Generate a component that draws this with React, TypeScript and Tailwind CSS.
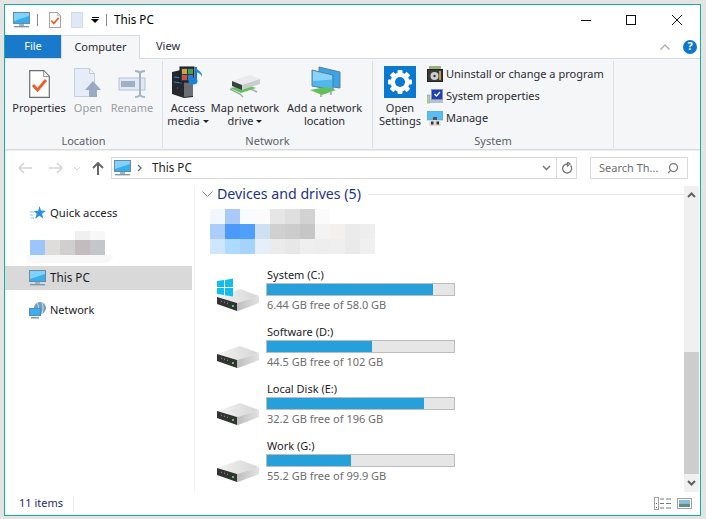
import React from "react";
import { Search } from "lucide-react";

const PcIcon = ({ size = 17 }: { size?: number }) => (
  <svg width={size} height={size} viewBox="0 0 17 17">
    <rect x="0.5" y="0.5" width="16" height="11" fill="#37aef2" stroke="#6f8a9c" />
    <path d="M1 1h15v3L1 9z" fill="#7fd2fb" />
    <rect x="6" y="12" width="5" height="2" fill="#9fb4c2" />
    <rect x="1" y="14" width="15" height="1.4" fill="#7d98ab" />
  </svg>
);

const DocCheckIcon = ({ w = 12, h = 16 }: { w?: number; h?: number }) => (
  <svg width={w} height={h} viewBox="0 0 21 28">
    <path d="M.7.7h14l5.6 5.6v21H.7z" fill="#fff" stroke="#6e6e6e" strokeWidth="1.2" />
    <path d="M14.5 1v5.5h5.5" fill="#eee" stroke="#9a9a9a" />
    <path d="M4 15l4.5 5L17 10" fill="none" stroke="#e8612c" strokeWidth="3" />
  </svg>
);

const OpenIcon = () => (
  <svg width="28" height="30" viewBox="0 0 28 30">
    <path d="M.5.5h15l5 5v23H.5z" fill="#e6edf8" stroke="#c3d0e2" />
    <path d="M15.5 1v4.5H20" fill="#f4f4f4" stroke="#c8c8c8" />
    <path d="M19 13l8 9h-4v7h-8v-7h-4z" fill="#9aa9c2" />
  </svg>
);

const RenameIcon = () => (
  <svg width="29" height="28" viewBox="0 0 29 28">
    <rect x="1" y="8" width="26" height="12" fill="#e2e9f4" stroke="#b4c3d6" />
    <rect x="3" y="11" width="14" height="6" fill="#9eb0c8" />
    <path d="M17 1c3 0 4 .5 5 2 1-1.500 2-2 5-2M22 3v22M17 27c3 0 4-.5 5-2 1 1.500 2 2 5 2" fill="none" stroke="#a5b3c6" strokeWidth="2" />
  </svg>
);

const MediaIcon = () => (
  <svg width="32" height="32" viewBox="0 0 32 32">
    <path d="M0 6l9-2 12 3v24l-9 1-12-4z" fill="#26282c" />
    <path d="M12 10v21l9-1V8z" fill="#6b6f75" />
    <path d="M2 11l8 1M2 16l8 1M5 22l1 0" stroke="#2c8ad6" strokeWidth="1" />
    <rect x="8" y="1" width="14" height="15" fill="#2a3a4a" stroke="#111" />
    <rect x="10" y="3" width="5" height="5" fill="#d8a23a" />
    <rect x="16" y="3" width="5" height="5" fill="#4a9c4f" />
    <rect x="10" y="9" width="5" height="5" fill="#c9533c" />
    <rect x="16" y="9" width="5" height="5" fill="#3f78c4" />
    <path d="M24 1v13" stroke="#1178d4" strokeWidth="2" />
    <path d="M24 1c1 4 7 4 6 10-1-3-3-4-6-5z" fill="#1b8fe6" />
    <ellipse cx="21" cy="15" rx="4.500" ry="3.500" fill="#1784dc" />
  </svg>
);

const MapDriveIcon = () => (
  <svg width="32" height="24" viewBox="0 0 32 24">
    <path d="M1 14l11 5 15-5-8-3z" fill="#62c05a" />
    <path d="M1 15l10 5 3 3M22 15l6 3" stroke="#a0aaa0" strokeWidth="1.500" fill="none" />
    <path d="M3 7l18-6 10 4-18 6z" fill="#e9eaea" />
    <path d="M3 7l10 4v5L3 12z" fill="#3c3f42" />
    <path d="M13 11l18-6v5l-18 6z" fill="#c9cbcc" />
  </svg>
);

const NetLocationIcon = () => (
  <svg width="32" height="32" viewBox="0 0 32 32">
    <path d="M10 1l21 5v16l-21-3z" fill="#3aa5e6" stroke="#5b7f96" />
    <path d="M3 4l21 5v15L3 20z" fill="#4fb8ee" stroke="#5b7f96" />
    <path d="M4 5l19 4.500v4L4 15z" fill="#8ad5f7" />
    <path d="M1 24l12 5 14-5-10-3z" fill="#62c05a" />
    <path d="M12 28v3M22 26v3" stroke="#9aa89a" strokeWidth="1.500" />
  </svg>
);

const SettingsIcon = () => (
  <svg width="32" height="32" viewBox="0 0 32 32">
    <rect width="32" height="32" fill="#0b78d0" />
    <g fill="#fff">
      <circle cx="16" cy="16" r="9.500" />
      <rect x="13.500" y="4" width="5" height="24" rx="1" />
      <rect x="13.500" y="4" width="5" height="24" rx="1" transform="rotate(45 16 16)" />
      <rect x="13.500" y="4" width="5" height="24" rx="1" transform="rotate(90 16 16)" />
      <rect x="13.500" y="4" width="5" height="24" rx="1" transform="rotate(135 16 16)" />
    </g>
    <circle cx="16" cy="16" r="5" fill="#0b78d0" />
  </svg>
);

const UninstallIcon = () => (
  <svg width="16" height="16" viewBox="0 0 16 16">
    <rect x="2" y="0" width="12" height="4" fill="#9ab07a" />
    <rect x="0.500" y="3.500" width="15" height="12" fill="#3a3a3a" stroke="#222" />
    <circle cx="7.500" cy="10" r="4" fill="#cfcfcf" />
    <circle cx="7.500" cy="10" r="1.200" fill="#333" />
    <rect x="12" y="5" width="2" height="9" fill="#b59b5a" />
  </svg>
);

const SysPropsIcon = () => (
  <svg width="16" height="15" viewBox="0 0 16 15">
    <rect x="0" y="6" width="3" height="8" fill="#a6d9a0" stroke="#889" strokeWidth=".5" />
    <rect x="4.500" y="0.500" width="11" height="10" fill="#1f3fc0" stroke="#8894a8" />
    <path d="M7.500 5l2 2 3.500-4" fill="none" stroke="#fff" strokeWidth="1.300" />
    <rect x="3" y="11" width="13" height="3" fill="#b8c0cc" />
  </svg>
);

const ManageIcon = () => (
  <svg width="16" height="15" viewBox="0 0 16 15">
    <rect x="0" y="0" width="16" height="9" fill="#58bdf5" stroke="#6f9ab5" strokeWidth=".6" />
    <path d="M3 9h10l1 6H2z" fill="#dcdcdc" />
    <rect x="4" y="10.500" width="2.500" height="3" fill="#333" />
    <rect x="9.500" y="10.500" width="2.500" height="3" fill="#333" />
    <rect x="6" y="6" width="4" height="3" fill="#555" />
  </svg>
);

const StarIcon = () => (
  <svg width="16" height="15" viewBox="0 0 16 15">
    <path d="M9.500 0l1.500 4.500 5 .2-4 3 1.400 5-4-2.900-4.200 2.900 1.500-5-3-2.800 4.500-.2z" fill="#2b8fdb" />
    <path d="M0 6h4M0 9h3M1 12h3" stroke="#8cc4ec" strokeWidth="1" />
  </svg>
);

const NetworkIcon = () => (
  <svg width="18" height="17" viewBox="0 0 18 17">
    <circle cx="11" cy="6" r="6" fill="#6f9cc4" />
    <path d="M8 1c2 2 2 8 0 10M13 1c1.500 3 1.500 7 0 10" stroke="#d4e4f0" fill="none" />
    <rect x="0.500" y="6.500" width="11" height="7" fill="#39aef2" stroke="#5d8aa6" />
    <rect x="2" y="15" width="8" height="1.500" fill="#7d98ab" />
  </svg>
);

const DriveIcon = ({ windows = false }: { windows?: boolean }) => (
  <svg width="44" height="33" viewBox="0 0 44 33" className="shrink-0">
    <defs>
      <linearGradient id="driveTop" x1="0" x2="1" y1="0" y2="0">
        <stop offset="0" stopColor="#f4f4f4" />
        <stop offset="1" stopColor="#d4d4d4" />
      </linearGradient>
      <linearGradient id="driveSide" x1="0" x2="1" y1="0" y2="0">
        <stop offset="0" stopColor="#bdbdbd" />
        <stop offset="1" stopColor="#e2e2e2" />
      </linearGradient>
    </defs>
    <path d="M1 19l23-8 19 7-22 7z" fill="url(#driveTop)" />
    <path d="M1 19l20 6v8L1 26z" fill="#333" />
    <path d="M21 25l22-7v7l-21 8h-1z" fill="url(#driveSide)" />
    <rect x="16" y="27" width="2" height="2" fill="#3fd45a" />
    <path d="M5 23l1 .5M8 24l1 .5M11 25l1 .5" stroke="#999" />
    {windows && (
      <g fill="#12bdee">
        <path d="M1 3l7-1v7H1z" />
        <path d="M9 2l8-1.500V9H9z" />
        <path d="M1 10h7v7l-7-1z" />
        <path d="M9 10h8v8.500l-8-1.200z" />
      </g>
    )}
  </svg>
);

const NavChevron = ({ dir }: { dir: "left" | "right" }) => (
  <svg width="14" height="12" viewBox="0 0 14 12">
    <path d={dir === "left" ? "M6 1L1 6l5 5M1 6h13" : "M8 1l5 5-5 5M13 6H0"} fill="none" stroke="#d4d4d4" strokeWidth="1.500" />
  </svg>
);

const RibbonButton = ({ w, icon, lines, disabled, caret }: { w: string; icon: React.ReactNode; lines: string[]; disabled?: boolean; caret?: boolean }) => (
  <div className={`${w} flex flex-col items-center`}>
    <div className="h-[32px] flex items-end justify-center">{icon}</div>
    <div className={`mt-[3px] text-center leading-[13px] whitespace-nowrap ${disabled ? "text-[#9a9da3]" : "text-[#2b2b33]"}`}>
      {lines.map((line, i) => (
        <div key={line}>
          {line}
          {caret && i === lines.length - 1 && <span className="inline-block ml-[3px] mb-[2px] border-x-[3px] border-t-[3px] border-x-transparent border-t-[#222]" />}
        </div>
      ))}
    </div>
  </div>
);

const RibbonGroup = ({ w, label, children, last }: { w: string; label: string; children: React.ReactNode; last?: boolean }) => (
  <div className={`${w} h-[87px] mt-[2px] flex flex-col ${last ? "" : "border-r"} border-[#dcdfe3]`}>
    <div className="flex-1 flex pt-[5px]">{children}</div>
    <div className="h-[15px] text-center text-[#5c6068] leading-[15px]">{label}</div>
  </div>
);

const SmallAction = ({ icon, label }: { icon: React.ReactNode; label: string }) => (
  <div className="h-[22px] flex items-center gap-[3px]">
    <span className="w-[16px] flex justify-center">{icon}</span>
    <span className="text-[#2b2b33] whitespace-nowrap">{label}</span>
  </div>
);

const drives = [
  { name: "System (C:)", free: "6.44 GB free of 58.0 GB", pct: 89, windows: true },
  { name: "Software (D:)", free: "44.5 GB free of 102 GB", pct: 56 },
  { name: "Local Disk (E:)", free: "32.2 GB free of 196 GB", pct: 84 },
  { name: "Work (G:)", free: "55.2 GB free of 99.9 GB", pct: 45 },
];

const mosaic = [
  ["bg-[#f2f6fd]", "bg-[#a9c9fb]", "bg-[#f8fbff]", "bg-[#fafbfa]", "bg-[#e6e6e6]", "bg-[#dfdfdf]", "bg-[#d2d2d2]", "bg-[#fbfbfb]", "bg-white", "bg-white", "bg-white"],
  ["bg-[#abcdfb]", "bg-[#4a99fb]", "bg-[#4f9ffb]", "bg-[#cfe0f3]", "bg-[#d0d0d0]", "bg-[#cccccc]", "bg-[#c6c6c6]", "bg-[#f3f3f3]", "bg-[#f2f1f0]", "bg-[#eaebea]", "bg-[#eeeeee]"],
  ["bg-[#cfe7fe]", "bg-[#addafe]", "bg-[#a4d3fc]", "bg-[#e6eefa]", "bg-[#ebebeb]", "bg-[#e7e7e7]", "bg-[#efefef]", "bg-[#eeeeee]", "bg-[#efefef]", "bg-[#eaeaea]", "bg-[#f0f0f0]"],
];

export default function App() {
  return (
    <div className="w-[706px] h-[519px] bg-[#e4e4e4] pt-[4px] pl-[4px] pr-[5px] pb-[3px] text-[11px] overflow-hidden font-['Noto_Sans',sans-serif]">
      <div className="h-full bg-white border border-[#14b09a] flex flex-col">
        {/* Title bar */}
        <div className="h-[30px] flex items-center shrink-0 pl-[8px]">
          <PcIcon />
          <span className="ml-[7px] w-px h-[12px] bg-[#8a8a8a]" />
          <span className="ml-[11px] flex"><DocCheckIcon /></span>
          <span className="ml-[10px] w-[12px] h-[16px] bg-[#dfe8f6] border border-[#d0dcec]" />
          <span className="ml-[8px] flex flex-col items-center gap-[1px]">
            <span className="w-[7px] h-px bg-black" />
            <span className="border-x-[4px] border-t-[4px] border-x-transparent border-t-black" />
          </span>
          <span className="ml-[7px] w-px h-[12px] bg-[#8a8a8a]" />
          <span className="ml-[7px] text-[11.7px] text-black">This PC</span>
          <div className="ml-auto flex items-center pr-[18px]">
            <svg width="10" height="10" viewBox="0 0 10 10"><path d="M0 5.500h10" stroke="#111" /></svg>
            <svg className="ml-[35px]" width="10" height="10" viewBox="0 0 10 10"><rect x=".5" y=".5" width="9" height="9" fill="none" stroke="#111" /></svg>
            <svg className="ml-[36px]" width="10" height="10" viewBox="0 0 10 10"><path d="M0 0l10 10M10 0L0 10" stroke="#111" /></svg>
          </div>
        </div>

        {/* Tabs */}
        <div className="h-[24px] flex items-stretch shrink-0 border-b border-[#dadbdc] relative">
          <div className="w-[56px] h-[23px] bg-[#1979ca] text-white flex items-center justify-center">File</div>
          <div className="w-[79px] h-[24px] bg-[#f5f6f7] border-x border-t border-[#dadbdc] flex items-center justify-center text-[#2b2b33]">Computer</div>
          <div className="w-[56px] flex items-center justify-center text-[#2b2b33]">View</div>
          <div className="ml-auto flex items-center pr-[3px] gap-[13px]">
            <svg width="10" height="6" viewBox="0 0 10 6"><path d="M.5 5.500L5 1l4.500 4.500" fill="none" stroke="#a8a8a8" strokeWidth="1.200" /></svg>
            <span className="w-[14px] h-[14px] rounded-full bg-[#0f76d0] text-white text-[11px] font-bold flex items-center justify-center">?</span>
          </div>
        </div>

        {/* Ribbon */}
        <div className="h-[91px] bg-[#f5f6f7] border-b border-[#dadbdc] flex shrink-0">
          <RibbonGroup w="w-[158px]" label="Location">
            <div className="w-[8px]" />
            <RibbonButton w="w-[52px]" icon={<DocCheckIcon w={21} h={28} />} lines={["Properties"]} />
            <RibbonButton w="w-[46px]" icon={<OpenIcon />} lines={["Open"]} disabled />
            <RibbonButton w="w-[42px]" icon={<RenameIcon />} lines={["Rename"]} disabled />
          </RibbonGroup>
          <RibbonGroup w="w-[210px]" label="Network">
            <RibbonButton w="w-[50px]" icon={<MediaIcon />} lines={["Access", "media"]} caret />
            <RibbonButton w="w-[64px]" icon={<MapDriveIcon />} lines={["Map network", "drive"]} caret />
            <RibbonButton w="w-[95px]" icon={<NetLocationIcon />} lines={["Add a network", "location"]} />
          </RibbonGroup>
          <RibbonGroup w="w-[241px]" label="System">
            <RibbonButton w="w-[54px]" icon={<SettingsIcon />} lines={["Open", "Settings"]} />
            <div className="flex flex-col -mt-[3px]">
              <SmallAction icon={<UninstallIcon />} label="Uninstall or change a program" />
              <SmallAction icon={<SysPropsIcon />} label="System properties" />
              <SmallAction icon={<ManageIcon />} label="Manage" />
            </div>
          </RibbonGroup>
        </div>

        {/* Address bar */}
        <div className="h-[36px] flex items-center shrink-0 pl-[13px] pt-[1px] border-t border-[#eeeeee] pb-[2px]">
          <NavChevron dir="left" />
          <span className="ml-[17px]"><NavChevron dir="right" /></span>
          <svg className="ml-[10px]" width="8" height="5" viewBox="0 0 8 5"><path d="M1 1l3 3 3-3" fill="none" stroke="#d4d4d4" /></svg>
          <svg className="ml-[11px]" width="12" height="13" viewBox="0 0 12 13"><path d="M6 1v12M1 6l5-5 5 5" fill="none" stroke="#666" strokeWidth="2" /></svg>
          <div className="ml-[7px] w-[466px] h-[22px] border border-[#d9d9d9] flex items-center">
            <span className="ml-[2px] flex"><PcIcon /></span>
            <svg className="ml-[6px]" width="5" height="8" viewBox="0 0 5 8"><path d="M1 1l3 3-3 3" fill="none" stroke="#666" strokeWidth="1.300" /></svg>
            <span className="ml-[10px] text-[11.7px] text-[#222]">This PC</span>
            <svg className="ml-auto mr-[5px]" width="9" height="6" viewBox="0 0 9 6"><path d="M1 1l3.500 3.500L8 1" fill="none" stroke="#777" strokeWidth="1.500" /></svg>
            <div className="w-[20px] h-full border-l border-[#d9d9d9] flex items-center justify-center">
              <svg width="12" height="12" viewBox="0 0 12 12"><path d="M9.500 3.500a4.500 4.500 0 1 1-3-1.500M6.500 0v4l2.500-2z" fill="none" stroke="#777" strokeWidth="1.300" /></svg>
            </div>
          </div>
          <div className="ml-[13px] w-[98px] h-[22px] border border-[#d9d9d9] flex items-center pl-[8px] text-[#6d6d6d]">
            <span>Search Th...</span>
            <Search size={12} strokeWidth={2.500} className="ml-auto mr-[8px] -scale-x-100 text-[#777]" />
          </div>
        </div>

        {/* Main */}
        <div className="flex-1 flex min-h-0">
          <div className="w-[190px] border-r border-[#f0f0f0] shrink-0 pt-[15px]">
            <div className="h-[24px] flex items-center pl-[25px] gap-[3px] text-[#1c1c28] text-[11.3px]">
              <span className="w-[17px] flex"><StarIcon /></span>Quick access
            </div>
            <div className="mt-[6px] h-[35px]">
              <div className="h-[9px] flex pl-[70px]">
                <span className="w-[15px] bg-[#f0f0f0]" />
                <span className="w-[15px] bg-[#f7f7f7]" />
              </div>
              <div className="h-[15px] flex pl-[25px]">
                <span className="w-[15px] bg-[#9cc5fb]" />
                <span className="w-[15px] bg-[#dedddc]" />
                <span className="w-[15px] bg-[#cfcfcf]" />
                <span className="w-[15px] bg-[#c2bcbf]" />
                <span className="w-[15px] bg-[#c4c7ca]" />
              </div>
              <div className="h-[8px] w-[87px] ml-[21px] bg-[#f8f8f8] rounded-b-full" />
            </div>
            <div className="w-[187px] h-[24px] bg-[#d9d9d9] flex items-center pl-[24px] gap-[4px] text-[#1c1c28] text-[11.7px]">
              <PcIcon />This PC
            </div>
            <div className="mt-[8px] h-[24px] flex items-center pl-[24px] gap-[3px] text-[#1c1c28] text-[11px]">
              <NetworkIcon />Network
            </div>
          </div>

          <div className="flex-1 min-w-0 pl-[7px] pt-[1px]">
            <div className="h-[14px] flex items-center">
              <svg width="11" height="6" viewBox="0 0 11 6"><path d="M.5.500l5 5 5-5" fill="none" stroke="#8b8b8b" /></svg>
              <span className="ml-[4px] text-[14.2px] text-[#1e3287] whitespace-nowrap">Devices and drives (5)</span>
              <span className="ml-[7px] flex-1 h-px bg-[#e5e5e5]" />
            </div>
            <div className="mt-[8px] ml-[8px] flex flex-col w-max">
              {mosaic.map((row, r) => (
                <div key={r} className="flex">
                  {row.map((cell, c) => (
                    <span key={c} className={`w-[15px] h-[15px] ${cell}`} />
                  ))}
                </div>
              ))}
            </div>
            <div className="mt-[13px] flex flex-col gap-[13px]">
              {drives.map((d) => (
                <div key={d.name} className="h-[44px] flex items-end">
                  <span className="ml-[14px] mr-[6px] flex"><DriveIcon windows={d.windows} /></span>
                  <div className="w-[189px]">
                    <div className="h-[16px] pl-px leading-[16px] text-[#1c1c28] whitespace-nowrap">{d.name}</div>
                    <div className="h-[13px] bg-[#e6e6e6] border border-[#bcbcbc]">
                      <div className="h-full bg-[#26a0da]" style={{ width: `${d.pct}%` }} />
                    </div>
                    <div className="h-[15px] pl-px leading-[18px] text-[#6d6d6d] whitespace-nowrap">{d.free}</div>
                  </div>
                </div>
              ))}
            </div>
          </div>

          <div className="w-[15px] mr-px shrink-0 bg-[#f0f0f0] flex flex-col">
            <div className="h-[18px] flex items-center justify-center">
              <svg width="9" height="6" viewBox="0 0 9 6"><path d="M1 5l3.500-3.500L8 5" fill="none" stroke="#606060" strokeWidth="2" /></svg>
            </div>
            <div className="flex-1" />
            <div className="h-[122px] bg-[#cdcdcd]" />
            <div className="h-[18px] flex items-center justify-center">
              <svg width="9" height="6" viewBox="0 0 9 6"><path d="M1 1l3.500 3.500L8 1" fill="none" stroke="#606060" strokeWidth="2" /></svg>
            </div>
          </div>
        </div>

        {/* Status bar */}
        <div className="h-[23px] shrink-0 flex items-center pl-[14px] text-[#1f2a6b]">
          <span className="w-[54px]">11 items</span>
          <span className="w-px h-[14px] bg-[#ececec]" />
          <svg className="ml-auto" width="17" height="13" viewBox="0 0 17 13">
            <rect x=".5" y=".5" width="4" height="12" fill="none" stroke="#a0a0a0" />
            <rect x="2" y="6" width="1" height="1" fill="#555" />
            <rect x="2" y="10" width="1" height="1" fill="#d04040" />
            <path d="M6 2h4M12 2h5M6 6.500h4M12 6.500h5M6 11h4M12 11h5" stroke="#777" />
          </svg>
          <svg className="ml-[6px] mr-[8px]" width="15" height="11" viewBox="0 0 15 11">
            <rect x=".5" y=".5" width="14" height="10" fill="#fff" stroke="#a0a0a0" />
            <rect x="2" y="2" width="11" height="3.500" fill="#7fc0ea" />
            <rect x="2" y="5.500" width="11" height="3.500" fill="#5f8f80" />
          </svg>
        </div>
      </div>
    </div>
  );
}
